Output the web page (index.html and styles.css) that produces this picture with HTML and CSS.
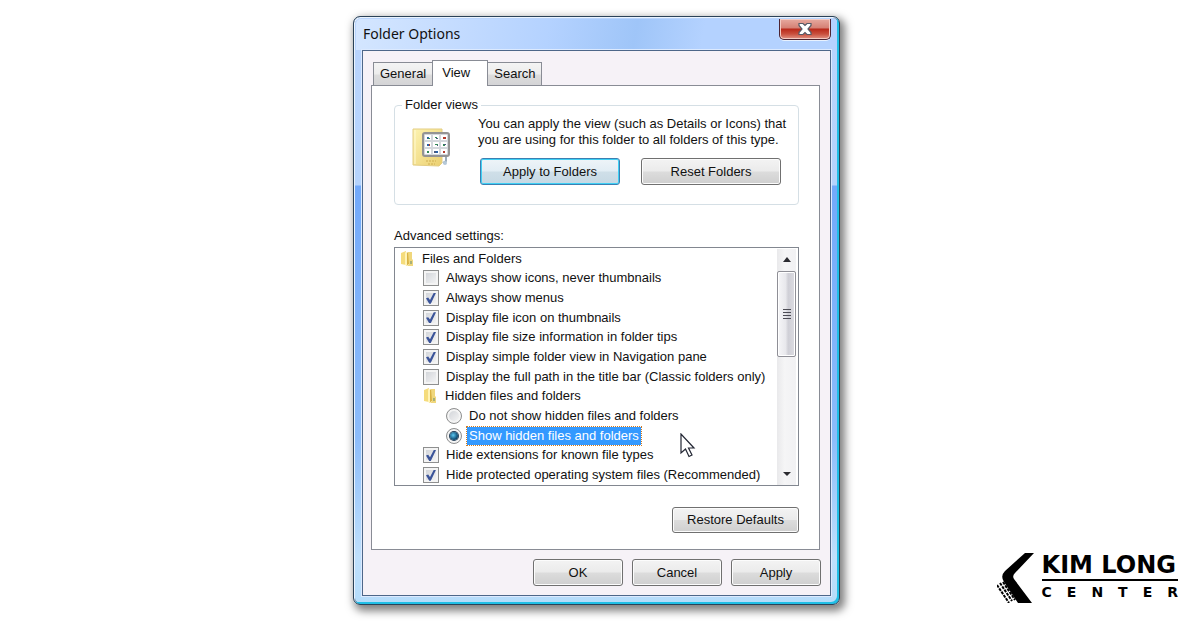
FILE: index.html
```html
<!DOCTYPE html>
<html lang="en">
<head>
<meta charset="utf-8">
<meta name="viewport" content="width=device-width, initial-scale=1.0">
<title>Folder Options</title>
<link rel="stylesheet" href="styles.css">
</head>
<body>

<main class="window">
	<div class="titlebar">
		<h1>Folder Options</h1>
		<button type="button" class="close" aria-label="Close">
			<svg width="16" height="14" viewBox="0 0 16 14"><path d="M2 1.5h4l2 2 2-2h4v2L11 7l3 3.500v2h-4l-2-2-2 2H2v-2L5 7 2 3.500z" fill="#fff" stroke="#565a66" stroke-width="1.200"/></svg>
		</button>
	</div>

	<form class="client">
		<div class="tabs" role="tablist">
			<button type="button" role="tab">General</button>
			<button type="button" role="tab" class="active" aria-selected="true">View</button>
			<button type="button" role="tab">Search</button>
		</div>

		<div class="panel" role="tabpanel">
			<fieldset class="views">
				<legend>Folder views</legend>
				<svg class="views-icon" width="40" height="40" viewBox="0 0 40 40">
					<defs>
						<linearGradient id="folder" x1="0" y1="0" x2="1" y2="1">
							<stop offset="0" stop-color="#fdf3b0"/>
							<stop offset="1" stop-color="#ebcf70"/>
						</linearGradient>
					</defs>
					<path d="M1 2h29v34l-3 3-26-1z" fill="url(#folder)" stroke="#e3cd83"/>
					<path d="M3 3v34" stroke="#fff9d2"/>
					<path d="M14 34h10M16 37h7" stroke="#cfae50" stroke-dasharray="2 1"/>
					<path d="M34 29v5l-3 2" fill="none" stroke="#9aabb8" stroke-width="2"/>
					<circle cx="33" cy="36" r="2" fill="#b5c8d8"/>
					<rect x="11" y="6" width="26" height="23" rx="2" fill="#d3d7dc" stroke="#949494" stroke-width="2"/>
					<path d="M13 8h6v5h-6zM21 8h6v5h-6zM29 8h6v5h-6zM13 15h6v5h-6zM21 15h6v5h-6zM29 15h6v5h-6zM13 22h6v5h-6zM21 22h6v5h-6zM29 22h6v5h-6z" fill="#fff"/>
					<path d="M15 10h2v2h-2zM15 17h2v2h-2zM24 24h2v2h-2z" fill="#2a62a8"/>
					<path d="M16 11h2v1h-2zM23 10h2v1h-2zM23 17h3v1h-3zM31 17h2v2h-2zM15 24h2v2h-2z" fill="#2f8a55"/>
					<path d="M31 10h3v2h-3zM17 17h1v2h-1zM31 24h2v2h-2z" fill="#b33a2c"/>
					<path d="M24 11h2v1h-2zM25 18h1v1h-1zM32 17h2v1h-2zM22 24h2v2h-2z" fill="#4a5a80"/>
				</svg>
				<div>
					<p>You can apply the view (such as Details or Icons) that you are using for this folder to all folders of this type.</p>
					<div class="views-buttons">
						<button type="button" class="btn default">Apply to Folders</button>
						<button type="button" class="btn">Reset Folders</button>
					</div>
				</div>
			</fieldset>

			<div class="caption" id="advanced">Advanced settings:</div>
			<div class="listbox">
				<ul class="settings" aria-labelledby="advanced">
					<li class="group"><svg class="folder" width="14" height="16" viewBox="0 0 14 16"><path d="M1 2l5-2v14l-5-1z" fill="#f5dc7c"/><path d="M6 2l3-1v12l-3 2z" fill="#d9b344"/><path d="M8 1h4v7l1 1v6H7l2-2z" fill="#f0d77c"/><path d="M5 1l2 1v13l-2-1z" fill="#fff3b6"/><path d="M10 10h2v3h-2z" fill="#a8b078"/></svg>Files and Folders</li>
					<li><label><input type="checkbox">Always show icons, never thumbnails</label></li>
					<li><label><input type="checkbox" checked>Always show menus</label></li>
					<li><label><input type="checkbox" checked>Display file icon on thumbnails</label></li>
					<li><label><input type="checkbox" checked>Display file size information in folder tips</label></li>
					<li><label><input type="checkbox" checked>Display simple folder view in Navigation pane</label></li>
					<li><label><input type="checkbox">Display the full path in the title bar (Classic folders only)</label></li>
					<li><svg class="folder" width="14" height="16" viewBox="0 0 14 16"><path d="M1 2l5-2v14l-5-1z" fill="#f5dc7c"/><path d="M6 2l3-1v12l-3 2z" fill="#d9b344"/><path d="M8 1h4v7l1 1v6H7l2-2z" fill="#f0d77c"/><path d="M5 1l2 1v13l-2-1z" fill="#fff3b6"/><path d="M10 10h2v3h-2z" fill="#a8b078"/></svg>Hidden files and folders</li>
					<li class="option"><label><input type="radio" name="hidden">Do not show hidden files and folders</label></li>
					<li class="option"><label><input type="radio" name="hidden" checked><span class="selected">Show hidden files and folders</span></label></li>
					<li><label><input type="checkbox" checked>Hide extensions for known file types</label></li>
					<li><label><input type="checkbox" checked>Hide protected operating system files (Recommended)</label></li>
				</ul>
				<div class="scrollbar">
					<button type="button" aria-label="Scroll up"><svg width="10" height="6" viewBox="0 0 10 6"><path d="M5 0l4 5H1z" fill="#2b2b30"/></svg></button>
					<div class="thumb"><i></i><i></i><i></i><i></i></div>
					<button type="button" class="down" aria-label="Scroll down"><svg width="10" height="6" viewBox="0 0 10 6"><path d="M1 1h8L5 5z" fill="#2b2b30"/></svg></button>
				</div>
			</div>

			<div class="restore"><button type="button" class="btn">Restore Defaults</button></div>
		</div>

		<div class="actions">
			<button type="button" class="btn">OK</button>
			<button type="button" class="btn">Cancel</button>
			<button type="button" class="btn">Apply</button>
		</div>
	</form>

	<svg class="cursor" width="16" height="25" viewBox="0 0 16 25"><path d="M1 1v19l4.500-4 3.500 7.500 3-1.500-3.500-7H14z" fill="#fff" stroke="#222633" stroke-width="1.200"/></svg>
</main>

<div class="brand">
	<svg width="40" height="50" viewBox="0 0 40 50">
		<path d="M28 0h9L18 20q-3 3-1 6l18 24H21L7 29q-4-6 1-11z" fill="#000"/>
		<path d="M1 32l4 6 8 12M4 30l4 6 8 12M7 29l4 6 8 12" transform="translate(-1 0)" fill="none" stroke="#000" stroke-width="2" stroke-dasharray="3 1"/>
	</svg>
	<div class="brand-text">
		<div class="brand-name">KIM LONG</div>
		<div class="brand-sub">CENTER</div>
	</div>
</div>

</body>
</html>
```
FILE: styles.css
```css
* {
box-sizing: border-box;
}
body {
display: grid;
grid-template-columns: 1fr auto 1fr;
align-items: start;
min-height: 100vh;
margin: 0;
padding: 16px 22px 20px 15px;
background: #fff;
color: #111;
font-family: "Liberation Sans", Arial, sans-serif;
font-size: 13px;
line-height: 16px;
}
button, input {
font: inherit;
color: inherit;
margin: 0;
}

/* window frame */
.window {
grid-column: 2;
position: relative;
width: 487px;
padding: 2px 8px 8px;
border: 1px solid #2b4258;
border-radius: 7px;
background: linear-gradient(#b9d4fd 0, #b5d3fc 168px, #72a9fa 169px, #8cbcfa 420px, #bfe0fc 540px, #b5dcfa);
box-shadow: inset 1px 1px #eaf4ff, inset -2px -2px #20bfe6, inset 0 0 0 1px #4a6480, 3px 4px 9px 2px rgba(0,0,0,.5);
}
.titlebar {
display: flex;
justify-content: space-between;
height: 31px;
margin: 0 -6px;
padding: 0 6px 0 7px;
border-radius: 5px 5px 0 0;
background: linear-gradient(100deg, #d4e6ff 0, #c3dbff 22%, #b4d2ff 40%, #9fc5f8 58%, #b4d2ff 72%, #b4d2ff);
}
.titlebar h1 {
margin: 0;
font: 14px/30px "Noto Sans", "Open Sans", sans-serif;
}
.close {
width: 52px;
height: 21px;
padding: 0;
border: 1px solid #4d2330;
border-top: 0;
border-radius: 0 0 5px 5px;
background: linear-gradient(#e7aaa0, #d58074 45%, #b9281a 50%, #c9503e 75%, #e29486);
box-shadow: inset 0 0 0 1px #f3cac2, 0 1px #e8f2ff;
}
.close svg {
display: block;
margin: 0 auto;
}
.client {
padding: 9px 10px 9px 8px;
border: 1px solid #4d6789;
background: #f6f2f7;
box-shadow: 0 0 0 1px #dceaff;
}

/* tabs */
.tabs {
display: flex;
align-items: flex-end;
height: 26px;
margin-bottom: -1px;
padding-left: 2px;
position: relative;
}
.tabs button {
height: 24px;
padding: 0 6px;
border: 1px solid #898c95;
background: linear-gradient(#f4f4f4, #ececec 50%, #dcdcdc 55%, #d4d4d6);
}
.tabs .active {
width: 56px;
height: 26px;
margin: 0 -1px;
padding: 0 9px 2px;
border-bottom: 0;
background: #fff;
text-align: left;
}
.panel {
padding: 11px 20px 16px 22px;
border: 1px solid #898c95;
background: #fff;
}

.btn {
height: 27px;
padding: 0 8px;
border: 1px solid #707070;
border-radius: 3px;
background: linear-gradient(#f3f3f3, #ebebeb 48%, #dcdcdc 52%, #cfcfcf);
box-shadow: inset 0 0 0 1px #fcfcfc;
}
.btn.default {
border-color: #3c7fb1;
background: linear-gradient(#eef4f8, #e2edf4 48%, #cfdfe8 52%, #c6d9e4);
box-shadow: inset 0 0 0 1px #3fd0f5;
}

.views {
display: flex;
gap: 26px;
height: 108px;
margin: 0;
padding: 3px 0 0 17px;
border: 1px solid #d5dfe5;
border-radius: 4px;
}
.views legend {
margin-left: -10px;
padding: 0 3px;
}
.views-icon {
flex: none;
margin-top: 11px;
}
.views p {
margin: 0 0 10px;
}
.views-buttons {
display: flex;
gap: 21px;
padding-left: 2px;
}
.views-buttons .btn {
width: 140px;
}

/* advanced settings list */
.caption {
margin: 23px 0 3px;
}
.listbox {
display: flex;
height: 239px;
padding: 1px 2px 0 0;
border: 1px solid #828790;
}
.settings {
flex: 1;
display: grid;
grid-auto-rows: 1fr;
min-width: 0;
margin: 0;
padding: 0;
list-style: none;
white-space: nowrap;
}
.settings li, .settings label {
display: flex;
align-items: center;
}
.settings li {
padding-left: 28px;
}
.settings .group {
padding-left: 5px;
}
.settings .option {
padding-left: 51px;
}
.folder {
margin: 0 8px 0 0;
}
.settings input {
appearance: none;
flex: none;
display: grid;
place-items: center;
width: 16px;
height: 16px;
margin-right: 7px;
border: 1px solid #8e8f8f;
background: linear-gradient(135deg, #cdd0d5, #f8f8f8);
box-shadow: inset 0 0 0 2px #f4f4f4;
}
.settings input[type=checkbox]:checked::before {
content: "";
width: 10px;
height: 11px;
background: #3b5499;
clip-path: polygon(0 50%, 22% 44%, 40% 66%, 78% 0, 100% 0, 48% 100%, 32% 100%);
}
.settings input[type=radio] {
border-radius: 50%;
}
.settings input[type=radio]:checked::before {
content: "";
width: 8px;
height: 8px;
border-radius: 50%;
background: radial-gradient(circle at 40% 40%, #5cc8f2, #12547c 60%, #0b2c48);
box-shadow: 0 0 0 1px #24405a;
}
.selected {
margin-left: -2px;
padding: 1px 2px;
outline: 1px dotted #d07a20;
background: #3399ff;
color: #fff;
}

.scrollbar {
display: flex;
flex: none;
flex-direction: column;
width: 19px;
background: linear-gradient(90deg, #e9e9eb, #f5f5f6 40%, #f1f1f3);
}
.scrollbar button {
height: 22px;
padding: 0;
border: 0;
background: none;
}
.scrollbar svg {
display: block;
margin: auto;
}
.scrollbar .down {
margin-top: auto;
}
.thumb {
display: flex;
flex-direction: column;
justify-content: center;
align-items: center;
gap: 2px;
height: 86px;
border: 1px solid #8f8f96;
border-radius: 2px;
background: linear-gradient(90deg, #f6f6f8, #e8e8ec 45%, #cfcfd6 60%, #dcdce2);
box-shadow: inset 0 0 0 1px #fff;
}
.thumb i {
width: 8px;
height: 1px;
background: #4c4c55;
}

.restore {
display: flex;
justify-content: flex-end;
margin-top: 21px;
}
.restore .btn {
width: 127px;
height: 26px;
}
.actions {
display: flex;
justify-content: flex-end;
gap: 9px;
margin: 9px -1px 0 0;
}
.actions .btn {
width: 90px;
}

.cursor {
position: absolute;
left: 326px;
top: 416px;
}

/* logo */
.brand {
grid-column: 3;
align-self: end;
justify-self: end;
display: flex;
gap: 5px;
margin-bottom: 5px;
color: #000;
font-family: "DejaVu Sans", sans-serif;
font-weight: bold;
}
.brand-name {
padding-bottom: 2px;
border-bottom: 2px solid #000;
font-size: 24px;
line-height: 24px;
}
.brand-sub {
padding-top: 3px;
font-size: 14px;
line-height: 16px;
letter-spacing: 15px;
margin-right: -15px;
}
```
